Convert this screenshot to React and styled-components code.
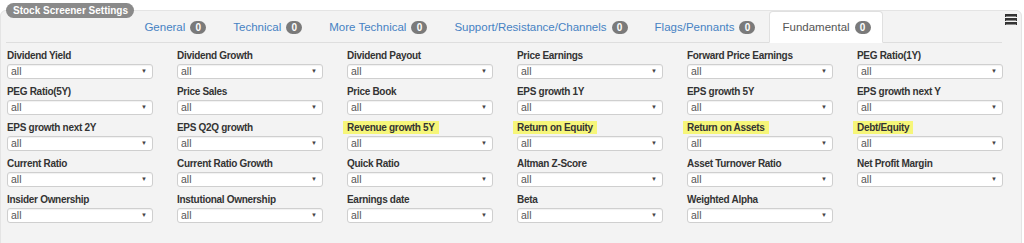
import React from "react";
import styled, { createGlobalStyle } from "styled-components";

const Global = createGlobalStyle`
  html, body {
    margin: 0;
    background: #fff;
    font-family: "Liberation Sans", Arial, sans-serif;
  }
`;

const tabs = [
  { name: "General", count: 0 },
  { name: "Technical", count: 0 },
  { name: "More Technical", count: 0 },
  { name: "Support/Resistance/Channels", count: 0 },
  { name: "Flags/Pennants", count: 0 },
  { name: "Fundamental", count: 0, active: true },
];

const fields = [
  ["Dividend Yield"],
  ["Dividend Growth"],
  ["Dividend Payout"],
  ["Price Earnings"],
  ["Forward Price Earnings"],
  ["PEG Ratio(1Y)"],
  ["PEG Ratio(5Y)"],
  ["Price Sales"],
  ["Price Book"],
  ["EPS growth 1Y"],
  ["EPS growth 5Y"],
  ["EPS growth next Y"],
  ["EPS growth next 2Y"],
  ["EPS Q2Q growth"],
  ["Revenue growth 5Y", true],
  ["Return on Equity", true],
  ["Return on Assets", true],
  ["Debt/Equity", true],
  ["Current Ratio"],
  ["Current Ratio Growth"],
  ["Quick Ratio"],
  ["Altman Z-Score"],
  ["Asset Turnover Ratio"],
  ["Net Profit Margin"],
  ["Insider Ownership"],
  ["Instutional Ownership"],
  ["Earnings date"],
  ["Beta"],
  ["Weighted Alpha"],
];

export default function App() {
  return (
    <>
      <Global />
      <Panel>
        <Legend>Stock Screener Settings</Legend>
        <HeaderRow>
          <TabNav>
            {tabs.map((t) => (
              <Tab key={t.name} $active={t.active}>
                {t.name}
                <Badge>{t.count}</Badge>
              </Tab>
            ))}
          </TabNav>
          <StackIcon viewBox="0 0 12 12" width="12" height="12" shapeRendering="crispEdges">
            <rect x="0" y="0" width="12" height="3" fill="#333" />
            <rect x="0" y="4" width="12" height="3" fill="#333" />
            <rect x="0" y="8" width="12" height="3" fill="#333" />
            <rect x="1" y="2" width="10" height="1" fill="#8a8a8a" />
            <rect x="1" y="6" width="10" height="1" fill="#8a8a8a" />
            <rect x="1" y="10" width="10" height="1" fill="#8a8a8a" />
          </StackIcon>
        </HeaderRow>
        <FieldGrid>
          {fields.map(([label, mark]) => (
            <Field key={label}>
              <Label $mark={mark}>{label}</Label>
              <SelectWrap>
                <Select defaultValue="all">
                  <option value="all">all</option>
                </Select>
                <Arrow>▼</Arrow>
              </SelectWrap>
            </Field>
          ))}
        </FieldGrid>
      </Panel>
    </>
  );
}

const Panel = styled.fieldset`
  margin: 3px 2px 0 0;
  padding: 0 4px 30px 5px;
  min-width: 0;
  border: 1px solid #e4e4e4;
  border-radius: 6px;
  background: #f3f3f3;
  min-height: 260px;
`;

const Legend = styled.legend`
  height: 15px;
  line-height: 15px;
  padding: 0 6px 0 7px;
  margin-left: 0;
  border-radius: 8px;
  background: #8a8a8a;
  color: #fff;
  font-weight: bold;
  font-size: 10px;
`;

const HeaderRow = styled.div`
  display: flex;
  align-items: flex-start;
  gap: 3px;
  margin-top: -7px;
`;

const TabNav = styled.div`
  flex: 1;
  display: flex;
  justify-content: center;
  border-bottom: 1px solid #dedede;
  padding-left: 6px;
`;

const Tab = styled.div`
  display: flex;
  align-items: center;
  gap: 5px;
  padding: 8px 11px 8px 12px;
  line-height: 14px;
  margin: 0 1px -1px 1px;
  border: 1px solid transparent;
  border-radius: 4px 4px 0 0;
  font-size: 11.5px;
  color: ${(p) => (p.$active ? "#555" : "#4682c3")};
  background: ${(p) => (p.$active ? "#fff" : "transparent")};
  border-color: ${(p) => (p.$active ? "#e0e0e0 #e0e0e0 transparent" : "transparent")};
`;

const Badge = styled.span`
  display: inline-block;
  min-width: 16px;
  height: 13px;
  line-height: 13px;
  border-radius: 7px;
  background: #7a7a7a;
  color: #fff;
  font-size: 10px;
  font-weight: bold;
  text-align: center;
`;

const StackIcon = styled.svg`
  display: block;
  margin-top: 3px;
  flex: none;
`;

const FieldGrid = styled.div`
  display: grid;
  grid-template-columns: repeat(6, 170px);
  row-gap: 6px;
  margin-top: 6px;
  padding-left: 1px;
`;

const Field = styled.div`
  display: flex;
  flex-direction: column;
  align-items: flex-start;
`;

const Label = styled.span`
  display: inline-block;
  line-height: 13px;
  height: 13px;
  margin-bottom: 2px;
  font-size: 10px;
  font-weight: bold;
  letter-spacing: -0.3px;
  color: #333;
  padding: 0 ${(p) => (p.$mark ? "4px" : "0")};
  margin-left: ${(p) => (p.$mark ? "-4px" : "0")};
  background: ${(p) => (p.$mark ? "#f6f679" : "transparent")};
`;

const SelectWrap = styled.div`
  position: relative;
  width: 146px;
`;

const Select = styled.select`
  appearance: none;
  display: block;
  width: 100%;
  height: 15px;
  padding: 0 14px 0 3px;
  margin: 0;
  border: 1px solid #cfcfcf;
  border-radius: 3px;
  background: #fff;
  box-shadow: inset 0 1px 1px rgba(0, 0, 0, 0.06);
  font-family: "Liberation Sans", Arial, sans-serif;
  font-size: 10.5px;
  line-height: 13px;
  color: #555;
`;

const Arrow = styled.span`
  position: absolute;
  right: 6px;
  top: 4px;
  font-size: 6px;
  line-height: 7px;
  color: #444;
  pointer-events: none;
`;
